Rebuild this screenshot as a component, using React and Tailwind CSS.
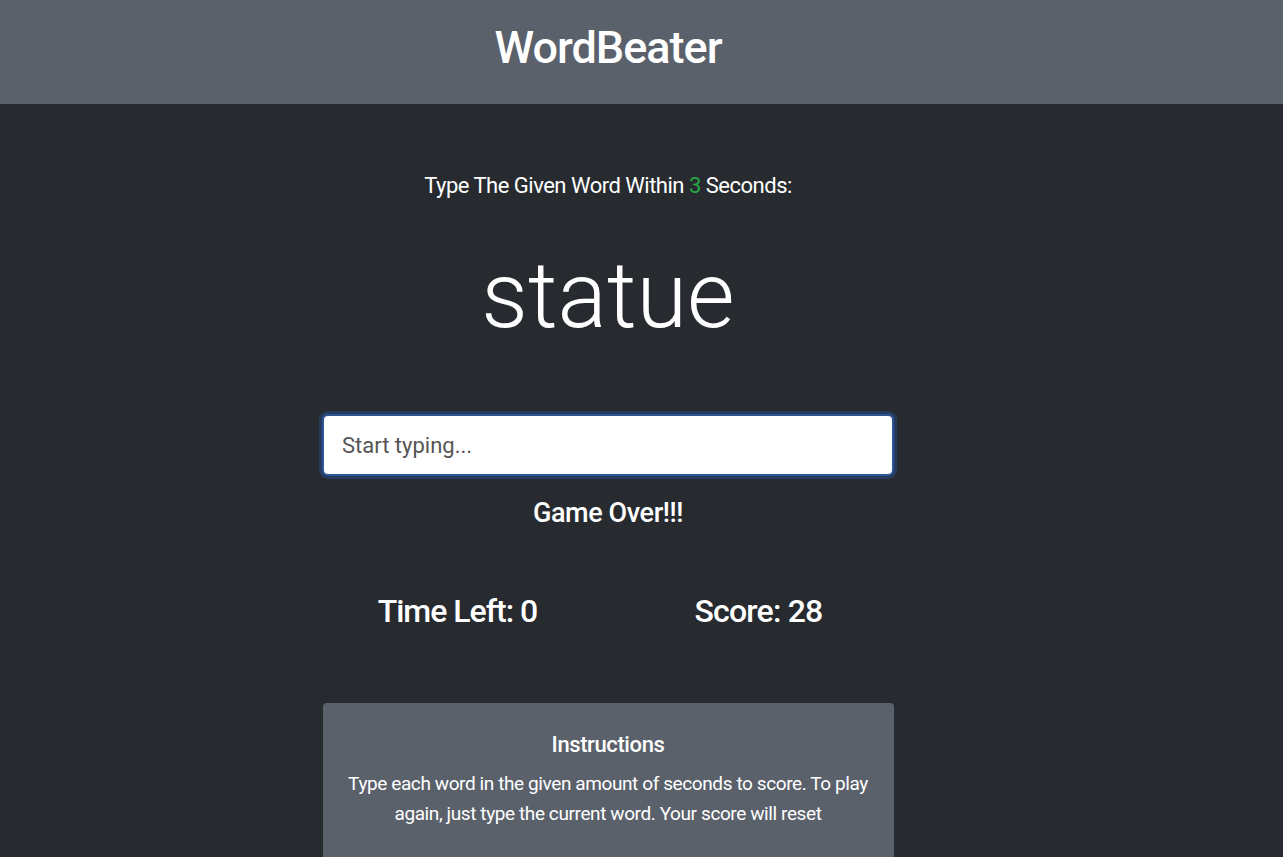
export default function App() {
  return (
    <div className="min-h-[857px] bg-[#272b30] text-white" style={{ fontFamily: 'Roboto, "Liberation Sans", sans-serif' }}>
      <header className="h-[104px] bg-[#5a616b] flex items-center">
        <div className="w-[1216px] text-center">
          <h1 className="text-[45px] font-medium leading-none tracking-[-1px] pb-[10px]">WordBeater</h1>
        </div>
      </header>
      <main className="w-[1216px] flex flex-col items-center">
        <p className="mt-[67px] text-[22px] font-normal leading-[30px] tracking-[-0.5px]">
          Type The Given Word Within <span className="text-[#28a745]">3</span> Seconds:
        </p>
        <h2 className="mt-[40px] text-[92px] font-light leading-[110px]">statue</h2>
        <input
          className="mt-[63px] w-[572px] h-[62px] rounded-[6px] bg-white border-2 border-[#2f5496] shadow-[0_0_0_3px_rgba(40,80,150,0.45)] px-[18px] text-[22px] text-[#333] placeholder-[#555] outline-none"
          placeholder="Start typing..."
        />
        <p className="mt-[21px] text-[27px] font-medium leading-[32px] tracking-[-0.4px]">Game Over!!!</p>
        <div className="mt-[62px] w-[602px] grid grid-cols-2">
          <div className="text-center text-[32px] font-medium leading-[40px] tracking-[-1px]">Time Left: 0</div>
          <div className="text-center text-[32px] font-medium leading-[40px] tracking-[-0.8px]">Score: 28</div>
        </div>
        <div className="mt-[72px] w-[571px] h-[160px] bg-[#5a616b] rounded-t-[4px] px-[20px] pt-[28px] text-center">
          <h3 className="text-[22px] font-medium leading-[28px] tracking-[-0.4px]">Instructions</h3>
          <p className="mt-[10px] text-[19px] leading-[30px] tracking-[-0.4px]">
            Type each word in the given amount of seconds to score. To play again, just type the current word. Your score will reset
          </p>
        </div>
      </main>
    </div>
  );
}
